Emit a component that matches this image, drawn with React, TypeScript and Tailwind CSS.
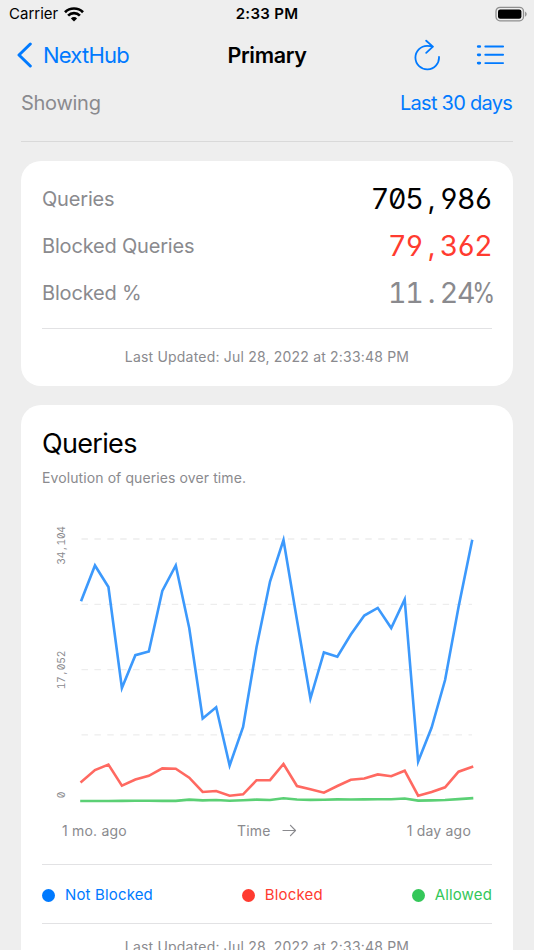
import type { ReactNode } from "react";

const X_START = 81.5;
const X_STEP = 13.466;

const NOT_BLOCKED = [
  600, 565.5, 587, 688, 655.2, 651.5, 591, 565.5, 628, 718.5, 707.3, 765.5, 727, 647, 581.5, 540, 620, 698.5,
  652.5, 656.7, 634.5, 615.5, 607.9, 628, 599.5, 761.5, 727.5, 680, 607, 541,
];

const BLOCKED = [
  781.7, 770, 764.6, 785.6, 779.5, 775.8, 768.4, 768.7, 777.7, 792, 791, 795.7, 794.3, 780.2, 780.2, 764, 786,
  789.3, 792.7, 786, 779.7, 778.5, 774.4, 776.2, 770.7, 795.7, 792, 787.3, 771.7, 767,
];

const ALLOWED = [
  801, 801, 801, 800.9, 800.8, 800.8, 800.9, 800.9, 799.6, 800.4, 800, 800.7, 800.2, 799.6, 800, 798.3, 799.5,
  799.9, 799.7, 799.4, 799.5, 799.4, 799.2, 799.2, 798.5, 800.6, 800.4, 800, 799.1, 798.2,
];

const GRID_LINES = [539, 604.4, 669.6, 734.8];

const AXIS_LABELS = [
  { text: "34,104", y: 545.3 },
  { text: "17,052", y: 670 },
  { text: "0", y: 795 },
];

const LEGEND = [
  { label: "Not Blocked", dot: "bg-[#007aff]", text: "text-[#007aff]" },
  { label: "Blocked", dot: "bg-[#ff3b30]", text: "text-[#ff3b30]" },
  { label: "Allowed", dot: "bg-[#34c759]", text: "text-[#34c759]" },
];

function toPoints(values: number[]) {
  return values.map((y, i) => `${(X_START + i * X_STEP).toFixed(2)},${y}`).join(" ");
}

// One x per character, centred on zero, so the label is monospaced
function monoXs(text: string, advance: number) {
  return [...text].map((_, i) => ((i - (text.length - 1) / 2) * advance).toFixed(2)).join(" ");
}

function StatusBar() {
  return (
    <div className="flex h-7 items-center justify-between px-[7px] text-black">
      <div className="flex flex-1 items-center gap-[6px]">
        <span className="ml-[2px] text-[15px]">Carrier</span>
        <svg width="20" height="15" viewBox="0 0 20 15" fill="none" stroke="currentColor" strokeWidth="2.7">
          <path d="M1 5.2a12.8 12.8 0 0 1 18 0" />
          <path d="M4.1 8.6a8.3 8.3 0 0 1 11.8 0" />
          <path d="M10 14.5 6.9 11.4a4.4 4.4 0 0 1 6.2 0z" fill="currentColor" stroke="none" />
        </svg>
      </div>
      <span className="text-[15px] font-semibold tracking-[0.02em]">2:33 PM</span>
      <div className="flex flex-1 justify-end">
        <svg width="32" height="16" viewBox="0 0 32 16">
          <rect x="1" y="1.4" width="27.5" height="13.4" rx="4" fill="none" stroke="#8f8f8f" strokeWidth="1.3" />
          <rect x="3" y="3.4" width="23.4" height="9.4" rx="2.2" fill="#000" />
          <path d="M30 5.5q1.8 1 1.8 2.6T30 10.7z" fill="#999" />
        </svg>
      </div>
    </div>
  );
}

function NavBar() {
  return (
    <div className="flex h-[54px] items-center justify-between px-[17px]">
      <button className="flex w-[200px] items-center gap-[11px] text-[#007aff]">
        <svg width="15" height="26" viewBox="0 0 15 26" fill="none" stroke="currentColor" strokeWidth="3">
          <path d="M13.3 2 2 13l11.3 11" strokeLinecap="round" strokeLinejoin="round" />
        </svg>
        <span className="text-[22px] tracking-[-0.035em]">NextHub</span>
      </button>
      <h1 className="text-[21.5px] font-semibold tracking-[-0.015em] text-black">Primary</h1>
      <div className="flex w-[200px] items-center justify-end gap-[36px] pr-[12px] text-[#007aff]">
        <svg width="26" height="32" viewBox="0 0 26 32" fill="none" stroke="currentColor" strokeWidth="1.8">
          <path
            d="M18.9 7.6C17 6.9 15.2 6.8 13.2 6.8A11.8 11.8 0 1 0 25 18M12.2 1.7l6.7 5.9-6.7 6.2"
            strokeLinecap="round"
            strokeLinejoin="round"
          />
        </svg>
        <svg width="29" height="22" viewBox="0 0 29 22" fill="none" stroke="currentColor" strokeLinecap="round">
          <path d="M9.3 2.5h17.8M9.3 10.8h17.8M9.3 19.1h17.8" strokeWidth="1.9" />
          <path d="M2.2 2.5h1.6M2.2 10.8h1.6M2.2 19.1h1.6" strokeWidth="2.7" />
        </svg>
      </div>
    </div>
  );
}

function MonoNumber({ value, className }: { value: string; className: string }) {
  return (
    <span className={`flex pt-[2px] text-[28.5px] [font-feature-settings:'tnum','zero','cv03','cv04'] ${className}`}>
      {[...value].map((char, i) => (
        <span key={i} className={`flex w-[17.25px] justify-center ${char === "%" ? "scale-x-[0.82]" : ""}`}>
          {char}
        </span>
      ))}
    </span>
  );
}

function Stat({ label, value, color }: { label: string; value: string; color: string }) {
  return (
    <div className="flex h-[47px] items-center justify-between">
      <span className="text-[20px] tracking-[-0.009em] text-[#8a8a8e]">{label}</span>
      <MonoNumber value={value} className={color} />
    </div>
  );
}

function Card({ children }: { children: ReactNode }) {
  return <section className="rounded-[20px] bg-white px-[21px]">{children}</section>;
}

function LastUpdated() {
  return (
    <p className="text-center text-[14px] leading-5 tracking-[0.014em] text-[#8a8a8e]">
      Last Updated: Jul 28, 2022 at 2:33:48 PM
    </p>
  );
}

function QueriesChart() {
  return (
    <svg className="block" width="450" height="300" viewBox="42 516 450 300" fill="none">
      {GRID_LINES.map((y, i) => (
        <line
          key={y}
          x1={X_START}
          x2={472}
          y1={y}
          y2={y}
          stroke="#ededed"
          strokeWidth={i === 0 ? 1.6 : 1.2}
          strokeDasharray="6.45 6.45"
        />
      ))}
      {AXIS_LABELS.map(({ text, y }) => (
        <text
          key={text}
          transform={`translate(64.8 ${y}) rotate(-90)`}
          x={monoXs(text, 6.4)}
          textAnchor="middle"
          fill="#8a8a8e"
          className="text-[10.3px] [font-feature-settings:'tnum','zero','cv03','cv04']"
        >
          {text}
        </text>
      ))}
      <g strokeWidth="2.6" strokeLinecap="square" strokeMiterlimit="10">
        <polyline points={toPoints(NOT_BLOCKED)} stroke="#3c99fc" />
        <polyline points={toPoints(BLOCKED)} stroke="#ff6961" />
        <polyline points={toPoints(ALLOWED)} stroke="#5bd075" />
      </g>
    </svg>
  );
}

export default function App() {
  return (
    <div className="h-[950px] w-[534px] overflow-hidden bg-[#eeeeee] font-['Inter','Liberation_Sans',sans-serif]">
      <StatusBar />
      <NavBar />
      <main className="px-[21px]">
        <div className="flex h-[60px] items-start justify-between border-b border-[#d9d9d9] pt-[6px] text-[20px] leading-[31px]">
          <span className="tracking-[-0.014em] text-[#8a8a8e]">Showing</span>
          <button className="mr-px tracking-[-0.037em] text-[#007aff]">Last 30 days</button>
        </div>

        <div className="mt-[19px] flex flex-col gap-[19.4px]">
          <Card>
            <div className="h-[225px] pt-[14px]">
              <Stat label="Queries" value="705,986" color="text-black" />
              <Stat label="Blocked Queries" value="79,362" color="text-[#ff3b30]" />
              <Stat label="Blocked %" value="11.24%" color="text-[#8a8a8e]" />
              <div className="mt-[12px] border-t border-[#e2e2e4] pt-[18px]">
                <LastUpdated />
              </div>
            </div>
          </Card>

          <Card>
            <h2 className="pt-[20.6px] text-[27px] leading-9 tracking-[-0.025em] text-black">Queries</h2>
            <p className="mt-[6.4px] text-[14px] leading-5 tracking-[0.007em] text-[#8a8a8e]">
              Evolution of queries over time.
            </p>
            <div className="mt-[28px]">
              <QueriesChart />
            </div>
            <div className="mt-[4.4px] flex items-center justify-between pl-[20px] pr-[21px] text-[14px] leading-5 tracking-[0.014em] text-[#8a8a8e]">
              <span>1 mo. ago</span>
              <span className="flex items-center gap-[11px]">
                Time
                <svg width="15" height="13" viewBox="0 0 15 13" fill="none" stroke="currentColor" strokeWidth="1.2">
                  <path d="M1 6.5h12.5M8.5 1.3l5 5.2-5 5.2" strokeLinecap="round" strokeLinejoin="round" />
                </svg>
              </span>
              <span>1 day ago</span>
            </div>
            <div className="mt-[23px] flex h-[60.4px] items-center justify-between border-y border-[#e2e2e4] pt-[3px]">
              {LEGEND.map(({ label, dot, text }) => (
                <div key={label} className="flex items-center gap-[10px]">
                  <span className={`size-[13px] rounded-full ${dot}`} />
                  <span className={`text-[15px] leading-5 tracking-[0.01em] ${text}`}>{label}</span>
                </div>
              ))}
            </div>
            <div className="pb-5 pt-[13px]">
              <LastUpdated />
            </div>
          </Card>
        </div>
      </main>
    </div>
  );
}
